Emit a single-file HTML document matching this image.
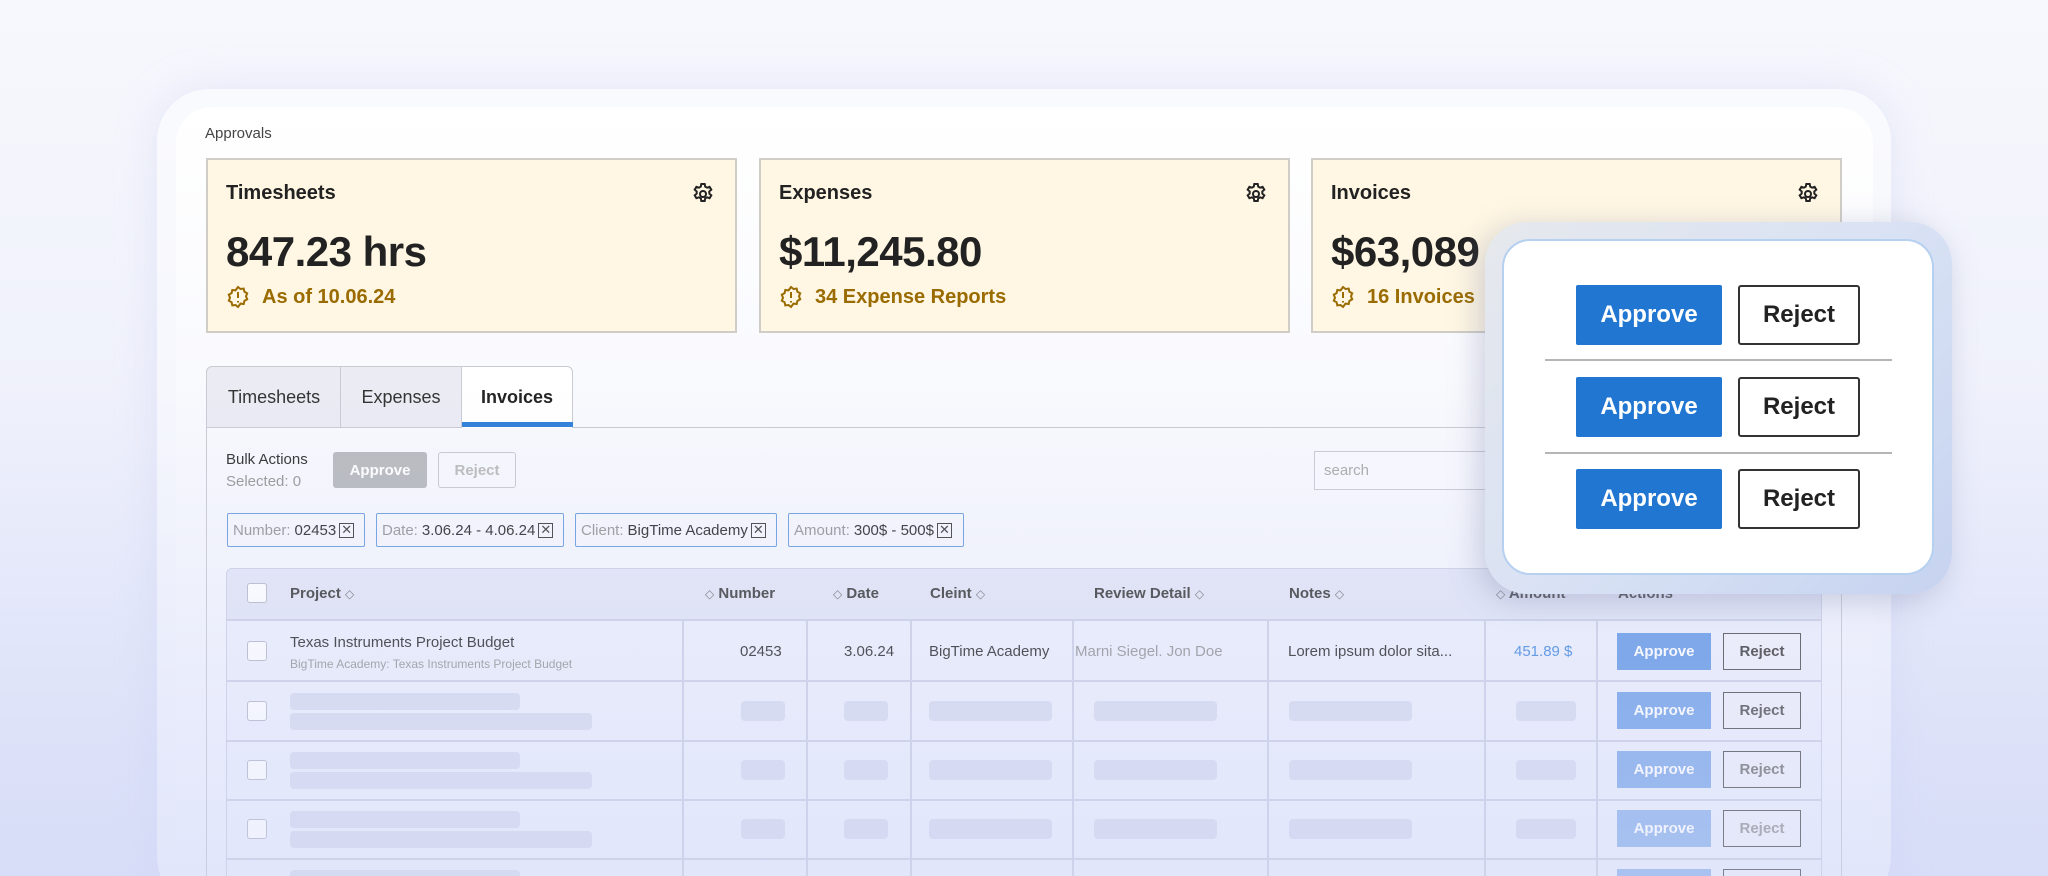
<!DOCTYPE html>
<html><head><meta charset="utf-8"><style>
*{box-sizing:border-box;margin:0;padding:0}
html,body{width:2048px;height:876px;overflow:hidden}
body{font-family:"Liberation Sans",Arial,sans-serif}
#wrap{position:relative;width:2048px;height:876px;overflow:hidden;background:linear-gradient(180deg,#f7f8fd 0%,#eef0fb 50%,#dde2f8 100%)}
.abs{position:absolute}
.frame{left:157px;top:89px;width:1734px;height:820px;border-radius:52px;background:rgba(255,255,255,0.45);box-shadow:0 0 40px rgba(200,205,240,.4)}
.inner{left:176px;top:107px;width:1697px;height:800px;border-radius:36px;background:linear-gradient(180deg,#ffffff 0%,#f7f8fd 45%,#eceffc 100%)}
.card{top:158px;width:531px;height:175px;background:#fff7e3;border:2px solid #cfcdc5}
.card .t{position:absolute;left:18px;top:22px;font-size:20px;font-weight:bold;color:#222}
.card .n{position:absolute;left:18px;top:68px;font-size:42px;font-weight:bold;color:#222;letter-spacing:-0.5px}
.card .s{position:absolute;left:18px;top:125px;font-size:20px;font-weight:bold;color:#9a6b00;display:flex;align-items:center;gap:12px}
.card .g{position:absolute;right:20px;top:22px}
.tab{top:366px;height:62px;border:1.5px solid #c9cad2;font-size:18px;color:#333;display:flex;align-items:center;justify-content:center;background:#eaebf3}
.btnA{background:#2176d2;color:#fff;font-weight:bold;display:flex;align-items:center;justify-content:center;border-radius:2px}
.btnR{background:#fff;border:2px solid #333;color:#222;font-weight:bold;display:flex;align-items:center;justify-content:center;border-radius:3px}
.chip{top:513px;height:34px;border:1.5px solid #6f9fe0;border-radius:2px;font-size:15px;color:#999;display:flex;align-items:center;padding-left:5px;white-space:nowrap}
.chip b{font-weight:normal;color:#333;margin-left:4px}
.x{display:inline-block;width:15px;height:15px;border:1.5px solid #444;margin-left:3px;font-size:13px;line-height:12px;text-align:center;color:#444}
.hd{top:585px;font-size:15px;font-weight:bold;color:#444}
.so{color:#777;font-weight:normal;font-size:12px}
.vl{width:1.5px;background:#cfd2e6}
.hl{height:2px;background:#cfd2e6;left:226px;width:1596px}
.sk{background:#d9ddf0;border-radius:4px}
.cb{width:20px;height:20px;border:1.5px solid #b9bccc;border-radius:3px;background:#fff}
.rowtxt{font-size:15px;color:#333}
.sa{font-size:15px;font-weight:bold;color:#fff;background:#6c9ee6;width:94px;height:37px;display:flex;align-items:center;justify-content:center}
.sr{font-size:15px;font-weight:bold;color:#444;border:1.5px solid #555;width:78px;height:37px;display:flex;align-items:center;justify-content:center;background:#f0f1fa}
</style></head><body><div id="wrap">
<div class="abs frame"></div>
<div class="abs inner"></div>
<div class="abs" style="left:205px;top:125px;font-size:15px;color:#444">Approvals</div>

<div class="abs card" style="left:206px"><div class="t">Timesheets</div><div class="n">847.23 hrs</div>
<div class="s"><svg width="24" height="24" viewBox="0 0 24 24" fill="none" stroke="#9a6b00" stroke-width="2"><path d="M12 2l2.5 2 3.2-.4.7 3.1 2.8 1.6-1.2 3 1.2 3-2.8 1.6-.7 3.1-3.2-.4L12 22l-2.5-2-3.2.4-.7-3.1-2.8-1.6 1.2-3-1.2-3 2.8-1.6.7-3.1 3.2.4z"/><path d="M12 7v6M12 16v1.5"/></svg>As of 10.06.24</div>
<svg class="g" width="24" height="24" viewBox="0 0 24 24" fill="none" stroke="#222" stroke-width="2"><circle cx="12" cy="12" r="3"/><path d="M10.3 2h3.4l.5 2.6 1.9 1.1 2.5-.9 1.7 2.9-2 1.7v2.2l2 1.7-1.7 2.9-2.5-.9-1.9 1.1-.5 2.6h-3.4l-.5-2.6-1.9-1.1-2.5.9-1.7-2.9 2-1.7v-2.2l-2-1.7 1.7-2.9 2.5.9 1.9-1.1z"/></svg></div>

<div class="abs card" style="left:759px"><div class="t">Expenses</div><div class="n">$11,245.80</div>
<div class="s"><svg width="24" height="24" viewBox="0 0 24 24" fill="none" stroke="#9a6b00" stroke-width="2"><path d="M12 2l2.5 2 3.2-.4.7 3.1 2.8 1.6-1.2 3 1.2 3-2.8 1.6-.7 3.1-3.2-.4L12 22l-2.5-2-3.2.4-.7-3.1-2.8-1.6 1.2-3-1.2-3 2.8-1.6.7-3.1 3.2.4z"/><path d="M12 7v6M12 16v1.5"/></svg>34 Expense Reports</div>
<svg class="g" width="24" height="24" viewBox="0 0 24 24" fill="none" stroke="#222" stroke-width="2"><circle cx="12" cy="12" r="3"/><path d="M10.3 2h3.4l.5 2.6 1.9 1.1 2.5-.9 1.7 2.9-2 1.7v2.2l2 1.7-1.7 2.9-2.5-.9-1.9 1.1-.5 2.6h-3.4l-.5-2.6-1.9-1.1-2.5.9-1.7-2.9 2-1.7v-2.2l-2-1.7 1.7-2.9 2.5.9 1.9-1.1z"/></svg></div>

<div class="abs card" style="left:1311px"><div class="t">Invoices</div><div class="n">$63,089</div>
<div class="s"><svg width="24" height="24" viewBox="0 0 24 24" fill="none" stroke="#9a6b00" stroke-width="2"><path d="M12 2l2.5 2 3.2-.4.7 3.1 2.8 1.6-1.2 3 1.2 3-2.8 1.6-.7 3.1-3.2-.4L12 22l-2.5-2-3.2.4-.7-3.1-2.8-1.6 1.2-3-1.2-3 2.8-1.6.7-3.1 3.2.4z"/><path d="M12 7v6M12 16v1.5"/></svg>16 Invoices</div>
<svg class="g" width="24" height="24" viewBox="0 0 24 24" fill="none" stroke="#222" stroke-width="2"><circle cx="12" cy="12" r="3"/><path d="M10.3 2h3.4l.5 2.6 1.9 1.1 2.5-.9 1.7 2.9-2 1.7v2.2l2 1.7-1.7 2.9-2.5-.9-1.9 1.1-.5 2.6h-3.4l-.5-2.6-1.9-1.1-2.5.9-1.7-2.9 2-1.7v-2.2l-2-1.7 1.7-2.9 2.5.9 1.9-1.1z"/></svg></div>

<div class="abs" style="left:206px;top:427px;width:1636px;height:460px;border:1.5px solid #c9cad2;border-bottom:none"></div>
<div class="abs tab" style="left:206px;width:136px;border-radius:6px 0 0 0">Timesheets</div>
<div class="abs tab" style="left:340px;width:122px">Expenses</div>
<div class="abs tab" style="left:461px;width:112px;background:#fff;font-weight:bold;color:#222;border-radius:0 6px 0 0;border-bottom:none">Invoices</div>
<div class="abs" style="left:462px;top:422px;width:111px;height:5px;background:#2f80d8"></div>

<div class="abs" style="left:226px;top:451px;font-size:15px;color:#333">Bulk Actions</div>
<div class="abs" style="left:226px;top:473px;font-size:15px;color:#999">Selected: 0</div>
<div class="abs" style="left:333px;top:452px;width:94px;height:36px;background:#b9babf;border-radius:3px;color:#fff;font-weight:bold;font-size:15px;display:flex;align-items:center;justify-content:center">Approve</div>
<div class="abs" style="left:438px;top:452px;width:78px;height:36px;border:1.5px solid #c8c9cf;border-radius:3px;color:#bbb;font-weight:bold;font-size:15px;display:flex;align-items:center;justify-content:center">Reject</div>
<div class="abs" style="left:1314px;top:451px;width:200px;height:39px;border:1.5px solid #c9cad2;font-size:15px;color:#aaa;padding:10px 9px;background:#f8f9fe">search</div>

<div class="abs chip" style="left:227px;width:138px">Number:<b>02453</b><span class="x">✕</span></div>
<div class="abs chip" style="left:376px;width:188px">Date:<b>3.06.24 - 4.06.24</b><span class="x">✕</span></div>
<div class="abs chip" style="left:575px;width:202px">Client:<b>BigTime Academy</b><span class="x">✕</span></div>
<div class="abs chip" style="left:788px;width:176px">Amount:<b>300$ - 500$</b><span class="x">✕</span></div>

<div class="abs" style="left:226px;top:568px;width:1596px;height:320px;border:1.5px solid #cfd2e6;border-radius:6px 6px 0 0;background:#edf0fc"></div>
<div class="abs" style="left:227px;top:569px;width:1594px;height:51px;background:#e3e6f6;border-radius:6px 6px 0 0"></div>
<div class="abs cb" style="left:247px;top:583px"></div>
<div class="abs hd" style="left:290px">Project <span class="so">◇</span></div>
<div class="abs hd" style="left:705px"><span class="so">◇</span> Number</div>
<div class="abs hd" style="left:833px"><span class="so">◇</span> Date</div>
<div class="abs hd" style="left:930px">Cleint <span class="so">◇</span></div>
<div class="abs hd" style="left:1094px">Review Detail <span class="so">◇</span></div>
<div class="abs hd" style="left:1289px">Notes <span class="so">◇</span></div>
<div class="abs hd" style="left:1496px"><span class="so">◇</span> Amount</div>
<div class="abs hd" style="left:1618px">Actions</div>

<div class="abs hl" style="top:619px"></div>
<div class="abs hl" style="top:680px"></div>
<div class="abs hl" style="top:740px"></div>
<div class="abs hl" style="top:799px"></div>
<div class="abs hl" style="top:858px"></div>
<div class="abs vl" style="left:682px;top:620px;height:260px"></div>
<div class="abs vl" style="left:806px;top:620px;height:260px"></div>
<div class="abs vl" style="left:910px;top:620px;height:260px"></div>
<div class="abs vl" style="left:1072px;top:620px;height:260px"></div>
<div class="abs vl" style="left:1267px;top:620px;height:260px"></div>
<div class="abs vl" style="left:1484px;top:620px;height:260px"></div>
<div class="abs vl" style="left:1596px;top:620px;height:260px"></div>

<div class="abs cb" style="left:247px;top:641px"></div>
<div class="abs rowtxt" style="left:290px;top:634px">Texas Instruments Project Budget</div>
<div class="abs" style="left:290px;top:657px;font-size:12px;color:#999">BigTime Academy: Texas Instruments Project Budget</div>
<div class="abs rowtxt" style="left:740px;top:643px">02453</div>
<div class="abs rowtxt" style="left:844px;top:643px">3.06.24</div>
<div class="abs rowtxt" style="left:929px;top:643px">BigTime Academy</div>
<div class="abs rowtxt" style="left:1075px;top:643px;color:#999">Marni Siegel. Jon Doe</div>
<div class="abs rowtxt" style="left:1288px;top:643px">Lorem ipsum dolor sita...</div>
<div class="abs rowtxt" style="left:1514px;top:643px;color:#4a8ee0">451.89 $</div>
<div class="abs sa" style="left:1617px;top:633px">Approve</div>
<div class="abs sr" style="left:1723px;top:633px">Reject</div>

<div class="abs" style="left:0;top:680px;width:2048px;height:200px">
<div class="abs cb" style="left:247px;top:21px"></div><div class="abs sk" style="left:290px;top:13px;width:230px;height:17px"></div><div class="abs sk" style="left:290px;top:33px;width:302px;height:17px"></div>
<div class="abs sk" style="left:741px;top:21px;width:44px;height:20px"></div><div class="abs sk" style="left:844px;top:21px;width:44px;height:20px"></div><div class="abs sk" style="left:929px;top:21px;width:123px;height:20px"></div><div class="abs sk" style="left:1094px;top:21px;width:123px;height:20px"></div><div class="abs sk" style="left:1289px;top:21px;width:123px;height:20px"></div><div class="abs sk" style="left:1516px;top:21px;width:60px;height:20px"></div>
<div class="abs sa" style="left:1617px;top:12px;background:#78a6e8">Approve</div><div class="abs sr" style="left:1723px;top:12px;color:#555">Reject</div>
<div class="abs cb" style="left:247px;top:80px"></div><div class="abs sk" style="left:290px;top:72px;width:230px;height:17px"></div><div class="abs sk" style="left:290px;top:92px;width:302px;height:17px"></div>
<div class="abs sk" style="left:741px;top:80px;width:44px;height:20px"></div><div class="abs sk" style="left:844px;top:80px;width:44px;height:20px"></div><div class="abs sk" style="left:929px;top:80px;width:123px;height:20px"></div><div class="abs sk" style="left:1094px;top:80px;width:123px;height:20px"></div><div class="abs sk" style="left:1289px;top:80px;width:123px;height:20px"></div><div class="abs sk" style="left:1516px;top:80px;width:60px;height:20px"></div>
<div class="abs sa" style="left:1617px;top:71px;background:#86aeea">Approve</div><div class="abs sr" style="left:1723px;top:71px;color:#777">Reject</div>
<div class="abs cb" style="left:247px;top:139px"></div><div class="abs sk" style="left:290px;top:131px;width:230px;height:17px"></div><div class="abs sk" style="left:290px;top:151px;width:302px;height:17px"></div>
<div class="abs sk" style="left:741px;top:139px;width:44px;height:20px"></div><div class="abs sk" style="left:844px;top:139px;width:44px;height:20px"></div><div class="abs sk" style="left:929px;top:139px;width:123px;height:20px"></div><div class="abs sk" style="left:1094px;top:139px;width:123px;height:20px"></div><div class="abs sk" style="left:1289px;top:139px;width:123px;height:20px"></div><div class="abs sk" style="left:1516px;top:139px;width:60px;height:20px"></div>
<div class="abs sa" style="left:1617px;top:130px;background:#93b6ec">Approve</div><div class="abs sr" style="left:1723px;top:130px;color:#999">Reject</div>
<div class="abs sk" style="left:290px;top:190px;width:230px;height:17px"></div>
<div class="abs sa" style="left:1617px;top:189px;background:#98b9ee">Approve</div><div class="abs sr" style="left:1723px;top:189px"></div>
</div>

<div class="abs" style="left:0;top:380px;width:2048px;height:496px;background:linear-gradient(180deg,rgba(215,220,250,0) 0%,rgba(205,212,248,0.35) 100%);pointer-events:none"></div>

<div class="abs" style="left:1485px;top:222px;width:467px;height:372px;border-radius:42px;background:linear-gradient(135deg,#e6e8ec 0%,#d9e2f4 50%,#c6d3f0 100%);box-shadow:-6px 6px 30px rgba(120,130,170,.35)"></div>
<div class="abs" style="left:1502px;top:239px;width:432px;height:336px;border-radius:28px;background:#fff;border:2px solid #b6d0f0"></div>
<div class="abs btnA" style="left:1576px;top:285px;width:146px;height:60px;font-size:24px">Approve</div>
<div class="abs btnR" style="left:1738px;top:285px;width:122px;height:60px;font-size:24px">Reject</div>
<div class="abs" style="left:1545px;top:359px;width:347px;height:2px;background:#b5b5b5"></div>
<div class="abs btnA" style="left:1576px;top:377px;width:146px;height:60px;font-size:24px">Approve</div>
<div class="abs btnR" style="left:1738px;top:377px;width:122px;height:60px;font-size:24px">Reject</div>
<div class="abs" style="left:1545px;top:452px;width:347px;height:2px;background:#b5b5b5"></div>
<div class="abs btnA" style="left:1576px;top:469px;width:146px;height:60px;font-size:24px">Approve</div>
<div class="abs btnR" style="left:1738px;top:469px;width:122px;height:60px;font-size:24px">Reject</div>
</div></body></html>
